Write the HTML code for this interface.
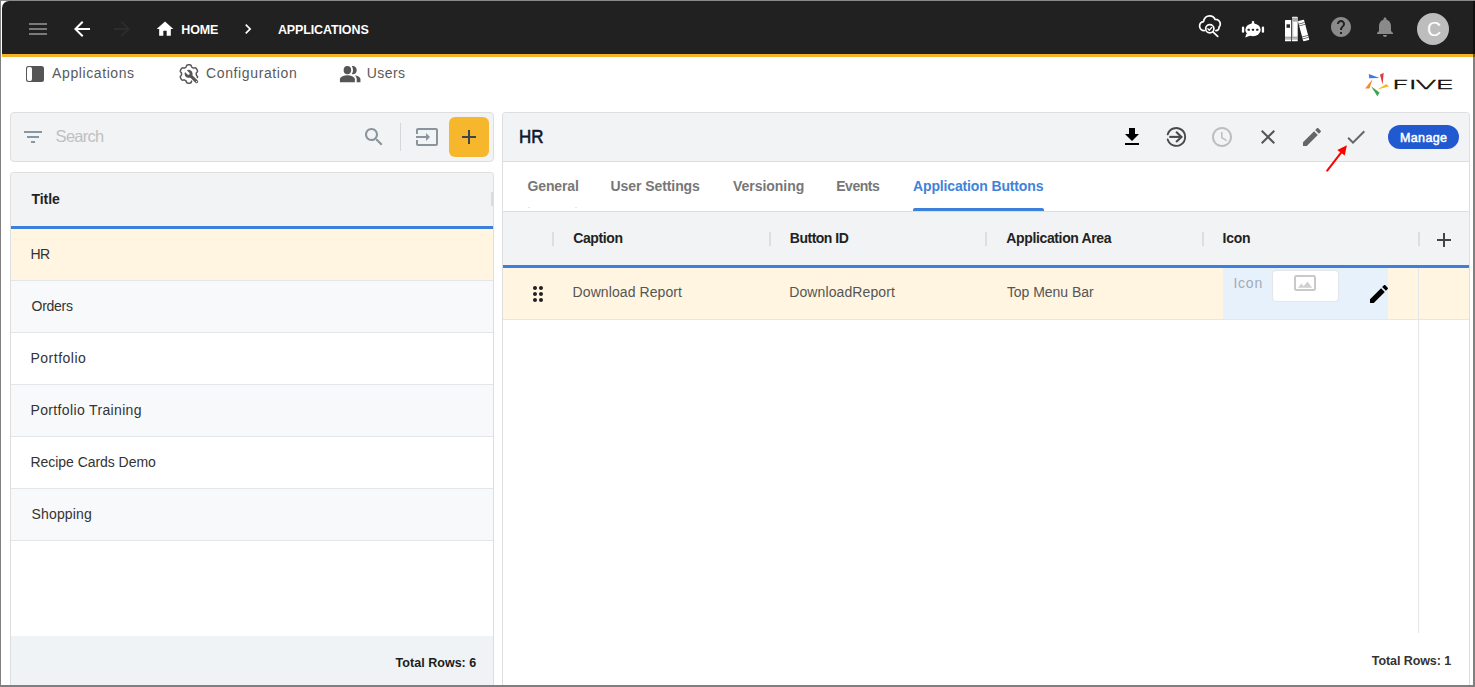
<!DOCTYPE html>
<html lang="en"><head><meta charset="utf-8"><title>Five - Applications</title>
<style>
*{box-sizing:border-box;margin:0;padding:0}
html,body{width:1475px;height:687px;overflow:hidden;background:#fff}
body{position:relative;font-family:"Liberation Sans", sans-serif}
.a,.t,.i{position:absolute}
.t{white-space:nowrap;display:block}
.i{display:block;overflow:visible}
</style></head><body>
<div class="a" style="left:2px;top:1px;width:1473px;height:56px;background:#212121;border-bottom:3px solid #f5b32a;border-top-left-radius:7px"></div>
<div class="a" style="left:1417px;top:13px;width:32px;height:32px;background:#bdbdbd;border-radius:50%"></div>
<div class="a" style="left:26px;top:66px;width:18.2px;height:16px;background:#555;border-radius:2.500px"></div>
<div class="a" style="left:27px;top:67px;width:5px;height:14px;background:#fff;border-radius:2px"></div>
<div class="a" style="left:10px;top:112px;width:484px;height:50px;background:#f2f3f5;border:1px solid #dedede;border-radius:4px"></div>
<div class="a" style="left:400px;top:123px;width:1px;height:28px;background:#d4d8dc"></div>
<div class="a" style="left:449px;top:117px;width:40px;height:40px;background:#f6b72c;border-radius:6px"></div>
<div class="a" style="left:10px;top:172px;width:484px;height:513px;background:#fff;border:1px solid #dedede;border-bottom:0;border-radius:4px 4px 0 0"></div>
<div class="a" style="left:11px;top:173px;width:482px;height:53px;background:#f2f3f5;border-radius:3px 3px 0 0"></div>
<div class="a" style="left:11px;top:226px;width:482px;height:3px;background:#3d80db"></div>
<div class="a" style="left:11px;top:229px;width:482px;height:52px;background:#fff5e1;border-bottom:1px solid #e4e6e9"></div>
<div class="a" style="left:11px;top:281px;width:482px;height:52px;background:#f8f9fb;border-bottom:1px solid #e4e6e9"></div>
<div class="a" style="left:11px;top:333px;width:482px;height:52px;background:#fff;border-bottom:1px solid #e4e6e9"></div>
<div class="a" style="left:11px;top:385px;width:482px;height:52px;background:#f8f9fb;border-bottom:1px solid #e4e6e9"></div>
<div class="a" style="left:11px;top:437px;width:482px;height:52px;background:#fff;border-bottom:1px solid #e4e6e9"></div>
<div class="a" style="left:11px;top:489px;width:482px;height:52px;background:#f8f9fb;border-bottom:1px solid #e4e6e9"></div>
<div class="a" style="left:11px;top:636px;width:482px;height:49px;background:#eff3f5"></div>
<div class="a" style="left:502px;top:112px;width:968px;height:573px;background:#fff;border:1px solid #dedede;border-bottom:0;border-radius:4px 4px 0 0"></div>
<div class="a" style="left:503px;top:113px;width:966px;height:48px;background:#f2f3f5;border-radius:3px 3px 0 0"></div>
<div class="a" style="left:503px;top:161px;width:966px;height:1px;background:#dedede"></div>
<div class="a" style="left:503px;top:211px;width:966px;height:1px;background:#dedede"></div>
<div class="a" style="left:528px;top:207px;width:2px;height:1px;background:#dde9fb"></div>
<div class="a" style="left:575px;top:207px;width:2px;height:1px;background:#dde9fb"></div>
<div class="a" style="left:913px;top:208px;width:131px;height:3px;background:#3d80db;border-radius:2px 2px 0 0"></div>
<div class="a" style="left:503px;top:212px;width:966px;height:53px;background:#f2f3f5"></div>
<div class="a" style="left:503px;top:265px;width:966px;height:3px;background:#3d80db"></div>
<div class="a" style="left:503px;top:268px;width:966px;height:52px;background:#fff5e1;border-bottom:1px solid #e4e6e9"></div>
<div class="a" style="left:1223px;top:268px;width:165px;height:51px;background:#e7f1fc"></div>
<div class="a" style="left:1272px;top:270px;width:67px;height:32px;background:#fff;border:1px solid #e3e5e8;border-radius:4px"></div>
<div class="a" style="left:491px;top:192px;width:2px;height:14px;background:#d9dbde"></div>
<div class="a" style="left:552px;top:232px;width:2px;height:14px;background:#dcdee1"></div>
<div class="a" style="left:769px;top:232px;width:2px;height:14px;background:#dcdee1"></div>
<div class="a" style="left:985px;top:232px;width:2px;height:14px;background:#dcdee1"></div>
<div class="a" style="left:1202px;top:232px;width:2px;height:14px;background:#dcdee1"></div>
<div class="a" style="left:1418px;top:232px;width:2px;height:14px;background:#dcdee1"></div>
<div class="a" style="left:1418px;top:268px;width:1px;height:365px;background:#e4e6e9"></div>
<div class="a" style="left:1388px;top:125px;width:71px;height:24px;background:#2159d1;border-radius:12px"></div>
<svg class="i" style="left:26px;top:17px" width="24" height="24" viewBox="0 0 24 24" fill="#7a7a7a"><path d="M3 18h18v-2H3v2zm0-5h18v-2H3v2zm0-7v2h18V6H3z"/></svg>
<svg class="i" style="left:70px;top:17px" width="24" height="24" viewBox="0 0 24 24" fill="#fff"><path d="M20 11H7.83l5.59-5.59L12 4l-8 8 8 8 1.41-1.41L7.83 13H20v-2z"/></svg>
<svg class="i" style="left:110px;top:17px" width="24" height="24" viewBox="0 0 24 24" fill="#2c2c2c"><path d="M12 4l-1.41 1.41L16.17 11H4v2h12.17l-5.58 5.59L12 20l8-8z"/></svg>
<svg class="i" style="left:155px;top:19px" width="20" height="20" viewBox="0 0 24 24" fill="#fff"><path d="M10 20v-6h4v6h5v-8h3L12 3 2 12h3v8z"/></svg>
<svg class="i" style="left:237.5px;top:19.3px" width="20" height="20" viewBox="0 0 24 24" fill="#fff"><path d="M10 6L8.59 7.41 13.17 12l-4.58 4.59L10 18l6-6z"/></svg>
<svg class="i" style="left:1329px;top:15px" width="24" height="24" viewBox="0 0 24 24" fill="#8a8a8a"><path d="M12 2C6.48 2 2 6.48 2 12s4.480 10 10 10 10-4.480 10-10S17.520 2 12 2zm1 17h-2v-2h2v2zm2.070-7.750l-.9.920C13.450 12.900 13 13.500 13 15h-2v-.5c0-1.100.45-2.100 1.170-2.830l1.240-1.260c.37-.36.59-.86.59-1.410 0-1.100-.9-2-2-2s-2 .9-2 2H8c0-2.210 1.790-4 4-4s4 1.790 4 4c0 .88-.36 1.680-.93 2.250z"/></svg>
<svg class="i" style="left:1373px;top:15px" width="24" height="24" viewBox="0 0 24 24" fill="#8a8a8a"><path d="M12 22c1.100 0 2-.9 2-2h-4c0 1.100.89 2 2 2zm6-6v-5c0-3.070-1.640-5.640-4.500-6.320V4c0-.83-.67-1.500-1.500-1.500s-1.500.67-1.500 1.500v.68C7.630 5.360 6 7.920 6 11v5l-2 2v1h16v-1l-2-2z"/></svg>
<svg class="i" style="left:338.870px;top:61.630px" width="22.400" height="24.400" viewBox="0 0 24 24" preserveAspectRatio="none" fill="#555"><path d="M16.670 13.130C18.040 14.060 19 15.320 19 17v3h4v-3c0-2.180-3.570-3.470-6.330-3.870z"/><circle cx="9" cy="8" r="4"/><path d="M15 12c2.210 0 4-1.790 4-4s-1.790-4-4-4c-.47 0-.91.1-1.330.24C14.500 5.270 15 6.580 15 8s-.5 2.730-1.330 3.760c.42.140.86.240 1.330.240z"/><path d="M9 13c-2.670 0-8 1.340-8 4v3h16v-3c0-2.660-5.330-4-8-4z"/></svg>
<svg class="i" style="left:21px;top:125px" width="24" height="24" viewBox="0 0 24 24" fill="#8796a3"><path d="M10 18h4v-2h-4v2zM3 6v2h18V6H3zm3 7h12v-2H6v2z"/></svg>
<svg class="i" style="left:362px;top:125px" width="24" height="24" viewBox="0 0 24 24" fill="#8a949d"><path d="M15.5 14h-.79l-.28-.27C15.41 12.59 16 11.11 16 9.5 16 5.91 13.09 3 9.5 3S3 5.91 3 9.5 5.91 16 9.5 16c1.61 0 3.09-.59 4.23-1.57l.27.28v.79l5 4.99L20.49 19l-4.99-5zm-6 0C7.01 14 5 11.99 5 9.5S7.01 5 9.5 5 14 7.01 14 9.5 11.99 14 9.5 14z"/></svg>
<svg class="i" style="left:415px;top:125px" width="24" height="24" viewBox="0 0 24 24" fill="#8a949d"><path d="M21 3.01H3c-1.1 0-2 .9-2 2V9h2V4.99h18v14.03H3V15H1v4.01c0 1.1.9 1.98 2 1.98h18c1.1 0 2-.88 2-1.98v-14c0-1.11-.9-2-2-2zM11 16l4-4-4-4v3H1v2h10v3z"/></svg>
<svg class="i" style="left:457px;top:125px" width="24" height="24" viewBox="0 0 24 24" fill="#3b4451"><path d="M19 13h-6v6h-2v-6H5v-2h6V5h2v6h6v2z"/></svg>
<svg class="i" style="left:1120px;top:125px" width="24" height="24" viewBox="0 0 24 24" fill="#000"><path d="M19 9h-4V3H9v6H5l7 7 7-7zM5 18v2h14v-2H5z"/></svg>
<svg class="i" style="left:1210px;top:125px" width="24" height="24" viewBox="0 0 24 24" fill="#bdbdbd"><path d="M11.99 2C6.47 2 2 6.48 2 12s4.47 10 9.99 10C17.52 22 22 17.52 22 12S17.52 2 11.99 2zM12 20c-4.42 0-8-3.580-8-8s3.580-8 8-8 8 3.580 8 8-3.580 8-8 8zm.5-13H11v6l5.250 3.150.75-1.230-4.500-2.670z"/></svg>
<svg class="i" style="left:1256px;top:125px" width="24" height="24" viewBox="0 0 24 24" fill="#555"><path d="M19 6.41L17.59 5 12 10.59 6.41 5 5 6.41 10.59 12 5 17.59 6.41 19 12 13.41 17.59 19 19 17.59 13.41 12z"/></svg>
<svg class="i" style="left:1300px;top:125px" width="24" height="24" viewBox="0 0 24 24" fill="#666"><path d="M3 17.25V21h3.75L17.81 9.94l-3.75-3.75L3 17.25zM20.71 7.04c.39-.39.39-1.02 0-1.41l-2.340-2.340c-.39-.39-1.020-.39-1.410 0l-1.830 1.830 3.750 3.750 1.830-1.830z"/></svg>
<svg class="i" style="left:1344px;top:125px" width="24" height="24" viewBox="0 0 24 24" fill="#666"><path d="M9 16.17L4.83 12l-1.420 1.410L9 19 21 7l-1.410-1.410z"/></svg>
<svg class="i" style="left:1432px;top:228px" width="24" height="24" viewBox="0 0 24 24" fill="#444"><path d="M19 13h-6v6h-2v-6H5v-2h6V5h2v6h6v2z"/></svg>
<svg class="i" style="left:526px;top:282px" width="24" height="24" viewBox="0 0 24 24" fill="#222"><path d="M11 18c0 1.100-.9 2-2 2s-2-.9-2-2 .9-2 2-2 2 .9 2 2zm-2-8c-1.100 0-2 .9-2 2s.9 2 2 2 2-.9 2-2-.9-2-2-2zm0-6c-1.100 0-2 .9-2 2s.9 2 2 2 2-.9 2-2-.9-2-2-2zm6 4c1.100 0 2-.9 2-2s-.9-2-2-2-2 .9-2 2 .9 2 2 2zm0 2c-1.100 0-2 .9-2 2s.9 2 2 2 2-.9 2-2-.9-2-2-2zm0 6c-1.100 0-2 .9-2 2s.9 2 2 2 2-.9 2-2-.9-2-2-2z"/></svg>
<svg class="i" style="left:1367px;top:282px" width="24" height="24" viewBox="0 0 24 24" fill="#000"><path d="M3 17.25V21h3.75L17.81 9.94l-3.75-3.75L3 17.25zM20.71 7.04c.39-.39.39-1.02 0-1.41l-2.340-2.340c-.39-.39-1.020-.39-1.410 0l-1.830 1.830 3.750 3.750 1.830-1.830z"/></svg>
<svg class="i" style="left:1198px;top:14px" width="24" height="24" viewBox="0 0 24 24" fill="none" stroke="#fff" stroke-width="1.700" stroke-linecap="round" stroke-linejoin="round">
<path d="M6.3 16.6C3.6 16.6 1.6 14.6 1.6 12.1c0-2.300 1.700-4.100 3.900-4.400C6 4.300 8.500 1.800 11.600 1.800c2.500 0 4.600 1.500 5.500 3.600 2.900-.2 5.200 1.900 5.200 4.600 0 1.300-.5 2.400-1.300 3.200 .3 1.900-1.100 3.400-3.100 3.400"/>
<circle cx="11.8" cy="14.7" r="4.1"/>
<path d="M14.9 17.800l4.800 4.500"/>
<path d="M9.900 14.800l1.400 1.400 2.500-2.800" stroke-width="1.300"/>
</svg>
<svg class="i" style="left:1241px;top:19px" width="24" height="20" viewBox="0 0 24 20">
<g fill="#fff">
<ellipse cx="12" cy="10.800" rx="7.700" ry="6.400"/>
<path d="M5.500 14.500L4.200 18.500 9.800 16.500z"/>
<path d="M10.300 5.200L11.400 2.200a.65 .65 0 0 1 1.200 0L13.700 5.200z"/>
<rect x=".9" y="7.600" width="2.300" height="6.200" rx="1.150"/>
<rect x="20.800" y="7.600" width="2.300" height="6.200" rx="1.150"/>
</g>
<g fill="#212121"><rect x="6.700" y="9.800" width="2.100" height="2" rx=".4"/><rect x="10.950" y="9.800" width="2.100" height="2" rx=".4"/><rect x="15.200" y="9.800" width="2.100" height="2" rx=".4"/></g>
</svg>
<svg class="i" style="left:1284px;top:16px" width="26" height="26" viewBox="0 0 26 26">
<rect x="1" y="3.900" width="6.200" height="21.400" rx=".6" fill="#fff"/>
<rect x="2.500" y="8.300" width="3.500" height="3.500" fill="#2a2a2a"/>
<rect x="1" y="20.800" width="6.200" height=".7" fill="#555"/><rect x="1" y="22.600" width="6.200" height=".7" fill="#555"/>
<rect x="8" y=".8" width="5.700" height="24.500" rx=".6" fill="#fff"/>
<rect x="8" y="1.700" width="5.700" height="4" fill="#aaa"/>
<rect x="8" y="5.700" width="1.300" height="15" fill="#c4c4c4"/>
<rect x="8" y="20.800" width="5.700" height=".7" fill="#555"/><rect x="8" y="22.600" width="5.700" height=".7" fill="#555"/>
<g transform="rotate(-15 19.500 14.500)">
<rect x="16.500" y="4" width="6.200" height="21" rx=".6" fill="#fff"/>
<rect x="16.500" y="6.600" width="6.200" height=".8" fill="#555"/><rect x="16.500" y="8.600" width="6.200" height=".8" fill="#555"/>
<rect x="16.500" y="20" width="6.200" height=".8" fill="#555"/><rect x="16.500" y="22" width="6.200" height=".8" fill="#555"/>
</g>
</svg>
<svg class="i" style="left:170px;top:58px" width="40" height="32" viewBox="0 0 40 32">
<path d="M27.37 19.51 L27.45 19.28 L27.49 19.04 L27.51 18.80 L27.46 18.54 L27.33 18.26 L27.11 17.97 L26.85 17.69 L26.62 17.43 L26.46 17.20 L26.36 16.98 L26.31 16.78 L26.28 16.58 L26.27 16.39 L26.27 16.19 L26.27 16.00 L26.27 15.81 L26.27 15.61 L26.28 15.42 L26.31 15.22 L26.36 15.02 L26.46 14.80 L26.62 14.57 L26.85 14.31 L27.11 14.03 L27.33 13.74 L27.46 13.46 L27.51 13.20 L27.49 12.96 L27.45 12.72 L27.37 12.49 L27.29 12.27 L27.19 12.04 L27.09 11.83 L26.98 11.61 L26.86 11.40 L26.74 11.20 L26.61 10.99 L26.47 10.80 L26.33 10.60 L26.18 10.42 L26.01 10.24 L25.83 10.08 L25.63 9.94 L25.38 9.85 L25.07 9.83 L24.71 9.88 L24.34 9.96 L24.00 10.03 L23.71 10.05 L23.48 10.03 L23.28 9.97 L23.10 9.90 L22.92 9.81 L22.75 9.72 L22.58 9.62 L22.42 9.52 L22.25 9.42 L22.09 9.31 L21.93 9.19 L21.78 9.05 L21.64 8.86 L21.52 8.60 L21.41 8.27 L21.30 7.90 L21.16 7.57 L20.98 7.32 L20.78 7.15 L20.56 7.03 L20.33 6.96 L20.10 6.91 L19.86 6.87 L19.62 6.84 L19.38 6.82 L19.14 6.81 L18.90 6.81 L18.66 6.81 L18.42 6.82 L18.18 6.84 L17.94 6.87 L17.70 6.91 L17.47 6.96 L17.24 7.03 L17.02 7.15 L16.82 7.32 L16.64 7.57 L16.50 7.90 L16.39 8.27 L16.28 8.60 L16.16 8.86 L16.02 9.05 L15.87 9.19 L15.71 9.31 L15.55 9.42 L15.38 9.52 L15.22 9.62 L15.05 9.72 L14.88 9.81 L14.70 9.90 L14.52 9.97 L14.32 10.03 L14.09 10.05 L13.80 10.03 L13.46 9.96 L13.09 9.88 L12.73 9.83 L12.42 9.85 L12.17 9.94 L11.97 10.08 L11.79 10.24 L11.62 10.42 L11.47 10.60 L11.33 10.80 L11.19 10.99 L11.06 11.20 L10.94 11.40 L10.82 11.61 L10.71 11.83 L10.61 12.04 L10.51 12.27 L10.43 12.49 L10.35 12.72 L10.31 12.96 L10.29 13.20 L10.34 13.46 L10.47 13.74 L10.69 14.03 L10.95 14.31 L11.18 14.57 L11.34 14.80 L11.44 15.02 L11.49 15.22 L11.52 15.42 L11.53 15.61 L11.53 15.81 L11.53 16.00 L11.53 16.19 L11.53 16.39 L11.52 16.58 L11.49 16.78 L11.44 16.98 L11.34 17.20 L11.18 17.43 L10.95 17.69 L10.69 17.97 L10.47 18.26 L10.34 18.54 L10.29 18.80 L10.31 19.04 L10.35 19.28 L10.43 19.51 L10.51 19.73 L10.61 19.96 L10.71 20.17 L10.82 20.39 L10.94 20.60 L11.06 20.80 L11.19 21.01 L11.33 21.20 L11.47 21.40 L11.62 21.58 L11.79 21.76 L11.97 21.92 L12.17 22.06 L12.42 22.15 L12.73 22.17 L13.09 22.12 L13.46 22.04 L13.80 21.97 L14.09 21.95 L14.32 21.97 L14.52 22.03 L14.70 22.10 L14.88 22.19 L15.05 22.28 L15.22 22.38 L15.38 22.48 L15.55 22.58 L15.71 22.69 L15.87 22.81 L16.02 22.95 L16.16 23.14 L16.28 23.40 L16.39 23.73 L16.50 24.10 L16.64 24.43 L16.82 24.68 L17.02 24.85 L17.24 24.97 L17.47 25.04 L17.70 25.09 L17.94 25.13 L18.18 25.16 L18.42 25.18 L18.66 25.19 L18.90 25.19 L19.14 25.19 L19.38 25.18 L19.62 25.16 L19.86 25.13 L20.10 25.09 L20.33 25.04 L20.56 24.97 L20.78 24.85 L20.98 24.68 L21.16 24.43 L21.30 24.10 L21.41 23.73 L21.52 23.40 L21.64 23.14" fill="none" stroke="#555" stroke-width="1.500" stroke-linejoin="round" stroke-linecap="round"/>
<g fill="#555">
<path d="M16.850 12.210A4 4 0 1 1 15.010 14.050L17.470 16.510A1.300 1.300 0 0 0 19.310 14.670z"/>
<path d="M19.660 18.980L21.780 16.860 27.700 22.500A1.600 1.600 0 0 1 25.450 24.800z"/>
</g>
<circle cx="26.550" cy="23.650" r=".65" fill="#fff"/>
</svg>
<svg class="i" style="left:1164px;top:125px" width="24" height="24" viewBox="0 0 24 24" fill="none" stroke="#4a4a4a" stroke-width="1.900" stroke-linecap="butt">
<path d="M3.700 9.400 A8.900 8.900 0 1 1 3.700 14.400" stroke-linecap="round"/>
<path d="M5.300 11.900H17.200" stroke-width="2.100"/>
<path d="M12.100 6.700l5.400 5.200-5.400 5.200" stroke-linejoin="miter" stroke-width="2.100"/>
</svg>
<svg class="i" style="left:1293px;top:274px" width="24" height="18" viewBox="0 0 24 18">
<rect x="2" y="2" width="20" height="14" rx="1.500" fill="#fff" stroke="#c9c9c9" stroke-width="2"/>
<path d="M5 13.800l3.400-4.200 2.200 2.700 3.900-4.800 4.600 6.300z" fill="#cfcfcf"/>
</svg>
<svg class="i" style="left:1320px;top:140px" width="34" height="36" viewBox="0 0 34 36">
<path d="M7.200 30.700L21.500 12.200" stroke="#f00" stroke-width="2" stroke-linecap="round" fill="none"/>
<path d="M26.900 5.200L17.300 10.100 24.700 15.600z" fill="#f00"/>
</svg>
<svg class="i" style="left:1360px;top:68px" width="100" height="34" viewBox="0 0 100 34">
<path d="M8.800 5.900L19.600 10 9.200 10.300z" fill="#3b7de0"/>
<path d="M23.700 4.800L20 6.700 22.600 16.400z" fill="#e03a3a"/>
<path d="M26.300 16L28.900 18.600 17.400 21.600z" fill="#f7b72b"/>
<path d="M11 18.300L19.600 24.600 17.400 28.300z" fill="#3aa653"/>
<path d="M12.500 11.200L9.500 20.500 5.100 20.500z" fill="#f58a2a"/>
<text transform="scale(2.4 1)" x="13.12 20.12 23.15 31.29" y="21.500" font-family="DejaVu Sans Light, Liberation Sans, sans-serif" font-size="12.8" fill="#111" stroke="#111" stroke-width=".7" vector-effect="non-scaling-stroke">FIVE</text>
</svg>
<span class="t" style="left:181.30px;top:22px;font-size:12.5px;line-height:17px;color:#fff;font-weight:700;letter-spacing:-0.188px;">HOME</span>
<span class="t" style="left:277.90px;top:22px;font-size:12.5px;line-height:17px;color:#fff;font-weight:700;letter-spacing:-0.118px;">APPLICATIONS</span>
<span class="t" style="left:52.10px;top:64px;font-size:14px;line-height:19px;color:#5a5a5a;letter-spacing:0.592px;">Applications</span>
<span class="t" style="left:206.00px;top:64px;font-size:14px;line-height:19px;color:#5a5a5a;letter-spacing:0.626px;">Configuration</span>
<span class="t" style="left:366.80px;top:64px;font-size:14px;line-height:19px;color:#5a5a5a;letter-spacing:0.410px;">Users</span>
<span class="t" style="left:55.60px;top:125px;font-size:16.5px;line-height:22px;color:#c0c0c0;letter-spacing:-0.721px;">Search</span>
<span class="t" style="left:31.40px;top:190px;font-size:14px;line-height:19px;color:#222;font-weight:700;letter-spacing:-0.035px;">Title</span>
<span class="t" style="left:30.50px;top:245px;font-size:14px;line-height:19px;color:#333;letter-spacing:-0.610px;">HR</span>
<span class="t" style="left:31.50px;top:297px;font-size:14px;line-height:19px;color:#333;letter-spacing:-0.257px;">Orders</span>
<span class="t" style="left:30.50px;top:349px;font-size:14px;line-height:19px;color:#333;letter-spacing:0.491px;">Portfolio</span>
<span class="t" style="left:30.50px;top:401px;font-size:14px;line-height:19px;color:#333;letter-spacing:0.352px;">Portfolio Training</span>
<span class="t" style="left:30.50px;top:453px;font-size:14px;line-height:19px;color:#333;letter-spacing:-0.048px;">Recipe Cards Demo</span>
<span class="t" style="left:31.50px;top:505px;font-size:14px;line-height:19px;color:#333;letter-spacing:0.160px;">Shopping</span>
<span class="t" style="left:395.60px;top:655px;font-size:12.5px;line-height:17px;color:#1c1c1c;font-weight:700;letter-spacing:0.027px;">Total Rows: 6</span>
<span class="t" style="left:518.89px;top:124px;font-size:18.5px;line-height:25px;color:#0f172a;transform:scaleX(0.9148);transform-origin:0 0;-webkit-text-stroke:0.6px #0f172a;">HR</span>
<span class="t" style="left:527.50px;top:177px;font-size:14px;line-height:19px;color:#777;font-weight:700;letter-spacing:-0.141px;">General</span>
<span class="t" style="left:610.60px;top:177px;font-size:14px;line-height:19px;color:#777;font-weight:700;letter-spacing:-0.080px;">User Settings</span>
<span class="t" style="left:733.00px;top:177px;font-size:14px;line-height:19px;color:#777;font-weight:700;letter-spacing:-0.036px;">Versioning</span>
<span class="t" style="left:836.20px;top:177px;font-size:14px;line-height:19px;color:#777;font-weight:700;letter-spacing:-0.445px;">Events</span>
<span class="t" style="left:913.00px;top:177px;font-size:14px;line-height:19px;color:#3f83d9;font-weight:700;letter-spacing:-0.139px;">Application Buttons</span>
<span class="t" style="left:573.20px;top:229px;font-size:14px;line-height:19px;color:#222;font-weight:700;letter-spacing:-0.392px;">Caption</span>
<span class="t" style="left:789.80px;top:229px;font-size:14px;line-height:19px;color:#222;font-weight:700;letter-spacing:-0.496px;">Button ID</span>
<span class="t" style="left:1006.30px;top:229px;font-size:14px;line-height:19px;color:#222;font-weight:700;letter-spacing:-0.364px;">Application Area</span>
<span class="t" style="left:1222.60px;top:229px;font-size:14px;line-height:19px;color:#222;font-weight:700;letter-spacing:-0.276px;">Icon</span>
<span class="t" style="left:572.60px;top:283px;font-size:14px;line-height:19px;color:#555;letter-spacing:0.080px;">Download Report</span>
<span class="t" style="left:789.20px;top:283px;font-size:14px;line-height:19px;color:#555;letter-spacing:0.108px;">DownloadReport</span>
<span class="t" style="left:1006.90px;top:283px;font-size:14px;line-height:19px;color:#555;letter-spacing:-0.036px;">Top Menu Bar</span>
<span class="t" style="left:1233.40px;top:274px;font-size:14px;line-height:19px;color:#a3abb3;letter-spacing:0.775px;">Icon</span>
<span class="t" style="left:1399.90px;top:130px;font-size:12.5px;line-height:17px;color:#fff;letter-spacing:0.396px;-webkit-text-stroke:0.5px #fff;">Manage</span>
<span class="t" style="left:1371.80px;top:653px;font-size:12.5px;line-height:17px;color:#333;font-weight:700;letter-spacing:-0.081px;">Total Rows: 1</span>
<span class="t" style="left:1427.00px;top:16px;font-size:19.5px;line-height:26px;color:#fff;">C</span>
<div class="a" style="left:0;top:0;width:1475px;height:1px;background:#8a8a8a"></div>
<div class="a" style="left:0;top:0;width:1px;height:687px;background:#808080"></div>
<div class="a" style="left:1473px;top:1px;width:2px;height:686px;background:rgba(0,0,0,.5)"></div>
<div class="a" style="left:1px;top:685px;width:1472px;height:2px;background:rgba(0,0,0,.5)"></div>
</body></html>
